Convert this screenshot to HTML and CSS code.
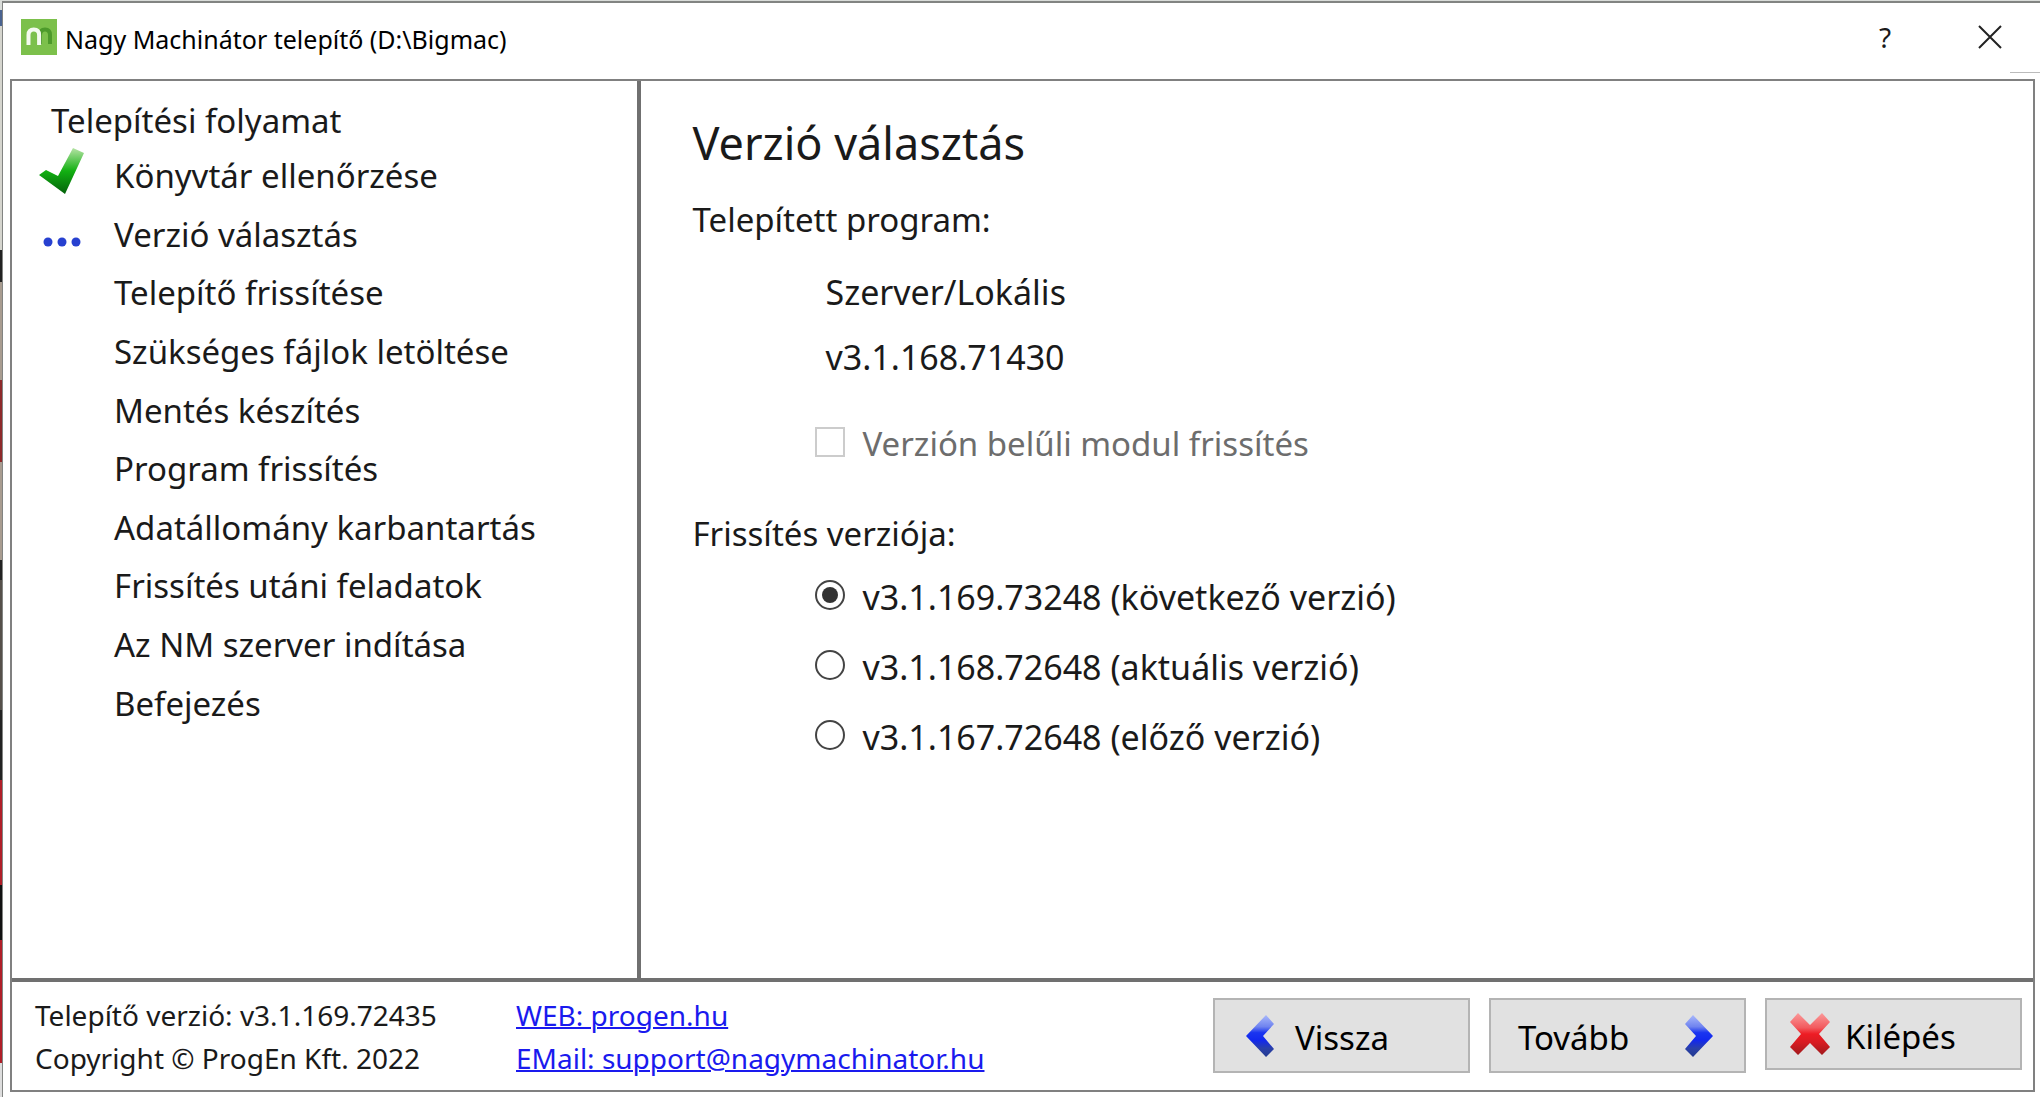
FILE: index.html
```html
<!DOCTYPE html>
<html lang="hu">
<head>
<meta charset="utf-8">
<meta name="viewport" content="width=device-width, initial-scale=1">
<title>Nagy Machinátor telepítő (D:\Bigmac)</title>
<link rel="stylesheet" href="styles.css">
</head>
<body>
<div class="window">
  <header class="titlebar">
    <svg class="logo" viewBox="0 0 36 36" aria-hidden="true">
      <rect width="36" height="36" fill="#7cc04b"/>
      <path d="M19 25V16q0-5.500 5-5.500t5 5.500v9" fill="none" stroke="#4d9a2b" stroke-width="4"/>
      <path d="M7.500 26V16q0-5.500 5.300-5.500t5.300 5.500v10" fill="none" stroke="#f4faef" stroke-width="4"/>
    </svg>
    <span class="caption">Nagy Machinátor telepítő (D:\Bigmac)</span>
    <button class="winbtn" type="button" aria-label="Súgó">?</button>
    <button class="winbtn" type="button" aria-label="Bezárás">
      <svg class="close" viewBox="0 0 24 24" aria-hidden="true"><path d="M1 1L23 23M23 1L1 23" stroke="#222" stroke-width="2"/></svg>
    </button>
  </header>

  <div class="frame">
    <div class="body">
      <nav class="steps" aria-labelledby="steps-title">
        <h2 class="steps-title" id="steps-title">Telepítési folyamat</h2>
        <ol class="step-list">
          <li class="step">
            <svg class="mark" viewBox="0 0 48 48" aria-hidden="true">
              <defs><linearGradient id="green" x1="0" y1="0" x2="0" y2="1"><stop offset="0" stop-color="#b5e3a4"/><stop offset=".5" stop-color="#12b012"/><stop offset="1" stop-color="#04620b"/></linearGradient></defs>
              <path d="M1 23L8 18L20 24L35 -4L46 1L27 42Z" fill="url(#green)"/>
            </svg>
            <span>Könyvtár ellenőrzése</span>
          </li>
          <li class="step">
            <svg class="mark" viewBox="0 0 48 48" aria-hidden="true"><g fill="#2740d0"><circle cx="10" cy="31" r="4.500"/><circle cx="24" cy="31" r="4.500"/><circle cx="38" cy="31" r="4.500"/></g></svg>
            <span>Verzió választás</span>
          </li>
          <li class="step"><span>Telepítő frissítése</span></li>
          <li class="step"><span>Szükséges fájlok letöltése</span></li>
          <li class="step"><span>Mentés készítés</span></li>
          <li class="step"><span>Program frissítés</span></li>
          <li class="step"><span>Adatállomány karbantartás</span></li>
          <li class="step"><span>Frissítés utáni feladatok</span></li>
          <li class="step"><span>Az NM szerver indítása</span></li>
          <li class="step"><span>Befejezés</span></li>
        </ol>
      </nav>

      <main class="page">
        <h1 class="page-title">Verzió választás</h1>
        <p class="label">Telepített program:</p>
        <div class="installed">
          <p>Szerver/Lokális</p>
          <p>v3.1.168.71430</p>
        </div>
        <label class="option module"><input class="tick" type="checkbox" disabled><span>Verzión belűli modul frissítés</span></label>
        <fieldset class="versions">
          <legend class="label">Frissítés verziója:</legend>
          <label class="option"><input class="radio" type="radio" name="version" checked><span>v3.1.169.73248 (következő verzió)</span></label>
          <label class="option"><input class="radio" type="radio" name="version"><span>v3.1.168.72648 (aktuális verzió)</span></label>
          <label class="option"><input class="radio" type="radio" name="version"><span>v3.1.167.72648 (előző verzió)</span></label>
        </fieldset>
      </main>
    </div>

    <footer class="footer">
      <div class="about">
        <span>Telepítő verzió: v3.1.169.72435</span>
        <span>Copyright © ProgEn Kft. 2022</span>
      </div>
      <div class="links">
        <a href="http://progen.hu">WEB: progen.hu</a>
        <a href="mailto:support@nagymachinator.hu">EMail: support@nagymachinator.hu</a>
      </div>
      <div class="actions">
        <button class="action back" type="button">
          <svg class="arrow" viewBox="0 0 30 44" aria-hidden="true">
            <defs><linearGradient id="blue" x1="0" y1="0" x2="0" y2="1"><stop offset="0" stop-color="#a9b8fb"/><stop offset=".28" stop-color="#6f83ef"/><stop offset=".42" stop-color="#1a35f0"/><stop offset=".6" stop-color="#1228ee"/><stop offset=".8" stop-color="#2a40a8"/><stop offset="1" stop-color="#223a90"/></linearGradient></defs>
            <path d="M21 1L29 10L18 22L29 35L21 43L1 22Z" fill="url(#blue)"/>
          </svg>
          <span>Vissza</span>
        </button>
        <button class="action next" type="button">
          <span>Tovább</span>
          <svg class="arrow" viewBox="0 0 30 44" aria-hidden="true"><path d="M9 1L1 10L12 22L1 35L9 43L29 22Z" fill="url(#blue)"/></svg>
        </button>
        <button class="action exit" type="button">
          <svg class="cross" viewBox="0 0 42 44" aria-hidden="true">
            <defs><linearGradient id="red" x1="0" y1="0" x2="0" y2="1"><stop offset="0" stop-color="#fb9a9a"/><stop offset=".35" stop-color="#f25a5e"/><stop offset=".5" stop-color="#ee1c24"/><stop offset=".7" stop-color="#d81c22"/><stop offset="1" stop-color="#a01a1c"/></linearGradient></defs>
            <path d="M9 1L21 13L33 1L41 10L30 22L41 35L33 43L21 31L9 43L1 35L12 22L1 10Z" fill="url(#red)"/>
          </svg>
          <span>Kilépés</span>
        </button>
      </div>
    </footer>
  </div>
</div>
</body>
</html>
```
FILE: styles.css
```css
* {
  box-sizing: border-box;
}

body {
  margin: 0;
  min-height: 100vh;
  padding: 1px 0 0 2px;
  display: flex;
  flex-direction: column;
  /* sliver of the desktop behind the window */
  background: linear-gradient(#d9dcd9 0 10px, #4a6390 10px 26px, #d5d5ce 26px 250px, #222 250px 282px, #a89c90 282px 380px, #8e2a2a 380px 462px, #a89c90 462px 560px, #222 560px 580px, #55504a 580px 710px, #222 710px 780px, #b01e28 780px 885px, #111 885px 940px, #b01e28 940px 1063px, #ddd 1063px);
  color: #1a1a1a;
  font: 33px/44px "Noto Sans", "Open Sans", sans-serif;
}

h1, h2, p, ol, fieldset, legend {
  margin: 0;
  padding: 0;
  border: 0;
  font-weight: 400;
}

button, input {
  font: inherit;
  color: inherit;
  margin: 0;
}

.window {
  flex: 1;
  display: flex;
  flex-direction: column;
  border: solid #828482;
  border-width: 2px 0 0 1px;
  background: #fff;
  padding: 0 5px 5px 7px;
}

.titlebar {
  position: relative;
  display: flex;
  align-items: center;
  height: 76px;
  padding: 0 15px 8px 11px;
  font-size: 25px;
}

.titlebar::after {
  content: "";
  position: absolute;
  right: -5px;
  bottom: 6px;
  width: 30px;
  height: 1px;
  background: #bbb;
}

.logo {
  width: 36px;
  height: 36px;
}

.caption {
  flex: 1;
  padding: 4px 0 0 8px;
  color: #000;
}

.winbtn {
  display: flex;
  align-items: center;
  justify-content: center;
  width: 60px;
  height: 44px;
  padding: 0;
  border: 0;
  background: none;
  font-size: 28px;
}

.winbtn + .winbtn {
  margin-left: 45px;
}

.close {
  width: 24px;
  height: 24px;
}

.frame {
  flex: 1;
  display: flex;
  flex-direction: column;
  border: 2px solid #808080;
}

.body {
  flex: 1;
  display: grid;
  grid-template-columns: 19fr 42fr;
}

.steps {
  border-right: 4px solid #707070;
  padding: 18px 0 24px 26px;
}

.steps-title {
  padding-left: 13px;
  font-size: 33px;
}

.step-list {
  list-style: none;
  display: grid;
  grid-auto-rows: 1fr;
  height: 586px;
  margin-top: 4px;
}

.step {
  display: grid;
  grid-template-columns: 48px 1fr;
  column-gap: 28px;
  align-items: center;
}

.step span {
  grid-column: 2;
}

.mark {
  width: 48px;
  height: 48px;
  overflow: visible;
}

.page {
  padding: 32px 51px 24px;
}

.page-title {
  font-size: 45px;
  line-height: 60px;
}

.label {
  margin-top: 25px;
}

.installed {
  display: grid;
  gap: 21px;
  padding: 28px 0 0 133px;
  font-size: 34px;
}

.option {
  display: flex;
  align-items: center;
  gap: 17px;
  padding-left: 123px;
  font-size: 34px;
}

.module {
  margin-top: 43px;
  color: #6d6d6d;
  font-size: 33px;
}

.versions {
  display: grid;
  row-gap: 26px;
  margin-top: 46px;
}

.versions .label {
  margin: 0 0 19px;
}

.tick, .radio {
  appearance: none;
  width: 30px;
  height: 30px;
  margin-bottom: 4px;
  background: #fff;
}

.tick {
  border: 2px solid #ccc;
}

.radio {
  display: grid;
  place-items: center;
  border: 2px solid #444;
  border-radius: 50%;
}

.radio:checked::before {
  content: "";
  width: 16px;
  height: 16px;
  border-radius: 50%;
  background: #333;
}

.footer {
  display: flex;
  border-top: 4px solid #707070;
  padding: 12px 11px 10px 23px;
  font-size: 28px;
  line-height: 43px;
}

.about, .links {
  display: flex;
  flex-direction: column;
}

.about {
  width: 481px;
}

.links a {
  color: #1a1aee;
  text-decoration-thickness: 2px;
}

.actions {
  display: flex;
  align-items: flex-start;
  gap: 19px;
  margin: 4px 0 0 auto;
  font-size: 33px;
}

.action {
  display: flex;
  align-items: center;
  width: 257px;
  height: 75px;
  padding: 0 30px;
  border: 2px solid #b4b4b4;
  background: #e1e1e1;
  color: #000;
}

.action span {
  padding-top: 4px;
}

.back {
  gap: 20px;
}

.next {
  justify-content: space-between;
  padding: 0 30px 0 27px;
}

.exit {
  gap: 14px;
  height: 72px;
  padding: 0 22px;
}

.arrow {
  width: 30px;
  height: 44px;
}

.cross {
  width: 42px;
  height: 44px;
}
```
